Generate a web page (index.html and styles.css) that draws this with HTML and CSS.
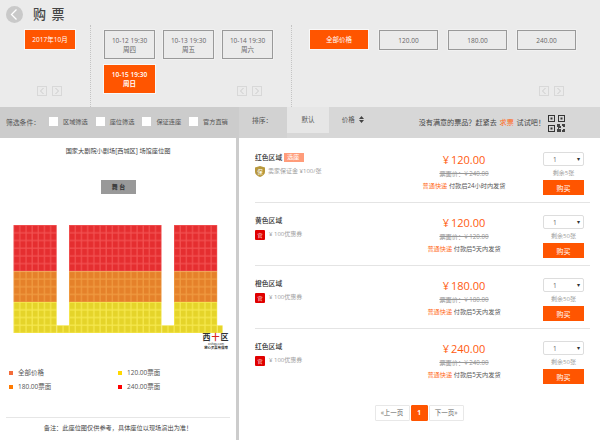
FILE: index.html
```html
<!DOCTYPE html>
<html lang="zh">
<head>
<meta charset="utf-8">
<title>购票</title>
<link rel="stylesheet" href="styles.css">
</head>
<body>
<div class="page">
  <header class="top">
    <div class="heading">
      <span class="back"><svg width="17" height="17" viewBox="0 0 17 17"><path d="M10.5 3.5 5.5 8.5l5 5" fill="none" stroke="#fff" stroke-width="1.3"/></svg></span>
      <h1>购 票</h1>
    </div>
    <div class="choices">
      <section class="col col-month">
        <div class="opts"><span class="opt on month">2017年10月</span></div>
        <div class="arrows"><span class="arrow"><svg width="10" height="10" viewBox="0 0 10 10"><path d="M6.5 2 3.5 5l3 3" fill="none" stroke="#ccc"/></svg></span><span class="arrow"><svg width="10" height="10" viewBox="0 0 10 10"><path d="M3.5 2 6.5 5l-3 3" fill="none" stroke="#ccc"/></svg></span></div>
      </section>
      <section class="col col-date">
        <div class="opts">
          <span class="opt date">10-12 19:30<br>周四</span>
          <span class="opt date">10-13 19:30<br>周五</span>
          <span class="opt date">10-14 19:30<br>周六</span>
          <span class="opt date on">10-15 19:30<br>周日</span>
        </div>
        <div class="arrows"><span class="arrow"><svg width="10" height="10" viewBox="0 0 10 10"><path d="M6.5 2 3.5 5l3 3" fill="none" stroke="#ccc"/></svg></span><span class="arrow"><svg width="10" height="10" viewBox="0 0 10 10"><path d="M3.5 2 6.5 5l-3 3" fill="none" stroke="#ccc"/></svg></span></div>
      </section>
      <section class="col col-price">
        <div class="opts">
          <span class="opt on all">全部价格</span>
          <span class="opt price">120.00</span>
          <span class="opt price">180.00</span>
          <span class="opt price">240.00</span>
        </div>
        <div class="arrows"><span class="arrow"><svg width="10" height="10" viewBox="0 0 10 10"><path d="M6.5 2 3.5 5l3 3" fill="none" stroke="#ccc"/></svg></span><span class="arrow"><svg width="10" height="10" viewBox="0 0 10 10"><path d="M3.5 2 6.5 5l-3 3" fill="none" stroke="#ccc"/></svg></span></div>
      </section>
    </div>
  </header>

  <div class="bar">
    <div class="filters">
      <span class="filter-title">筛选条件：</span>
      <span class="check"><i></i>区域筛选</span>
      <span class="check"><i></i>座位筛选</span>
      <span class="check"><i></i>保证连座</span>
      <span class="check"><i></i>官方直销</span>
    </div>
    <div class="sorts">
      <span class="sort-title">排序：</span>
      <span class="tab active">默认</span>
      <span class="tab">价格 <svg class="updown" width="5" height="7" viewBox="0 0 5 7"><path d="M2.5 0 5 3H0zM0 4h5L2.5 7z" fill="#444"/></svg></span>
      <span class="hint">没有满意的票品？赶紧去 <em>求票</em> 试试吧！</span>
      <svg class="qr" width="17" height="17" viewBox="0 0 17 17">
        <path d="M0 0h7v7H0zM1 1v5h5V1zM2.500 2.500h2v2h-2zM10 0h7v7h-7zM11 1v5h5V1zM12.500 2.500h2v2h-2zM0 10h7v7H0zM1 11v5h5v-5zM2.500 12.500h2v2h-2z" fill="#333" fill-rule="evenodd"/>
        <path d="M9 9h3v2h1v2h-2v1h2v3H9v-3h1v-2H9zM14 9h3v3h-2v-1h-1zM15 14h2v3h-3v-2h1z" fill="#444"/>
      </svg>
    </div>
  </div>

  <main class="body">
    <aside class="venue">
      <p class="venue-title">国家大剧院小剧场[西城区] 场馆座位图</p>
      <div class="stage">舞 台</div>
      <div class="map">
        <svg width="236" height="110" viewBox="0 0 236 110">
          <defs>
            <pattern id="r" width="6.17" height="7.7" patternUnits="userSpaceOnUse" x="13.5" y="0">
              <rect width="6.17" height="7.7" fill="#f25050"/><rect x=".8" y=".8" width="4.9" height="6.4" fill="#e52e30"/>
            </pattern>
            <pattern id="o" width="6.17" height="7.7" patternUnits="userSpaceOnUse" x="13.5" y="46.2">
              <rect width="6.17" height="7.7" fill="#f09a40"/><rect x=".8" y=".8" width="4.9" height="6.4" fill="#e5812a"/>
            </pattern>
            <pattern id="y" width="6.17" height="7.7" patternUnits="userSpaceOnUse" x="13.5" y="77">
              <rect width="6.17" height="7.7" fill="#f6e84e"/><rect x=".8" y=".8" width="4.9" height="6.4" fill="#e5d42a"/>
            </pattern>
          </defs>
          <rect x="13.5" y="0" width="43.2" height="46.2" fill="url(#r)"/>
          <rect x="69" y="0" width="92.5" height="46.2" fill="url(#r)"/>
          <rect x="174" y="0" width="43.2" height="46.2" fill="url(#r)"/>
          <rect x="13.5" y="46.2" width="43.2" height="30.8" fill="url(#o)"/>
          <rect x="69" y="46.2" width="92.5" height="30.8" fill="url(#o)"/>
          <rect x="174" y="46.2" width="43.2" height="30.8" fill="url(#o)"/>
          <rect x="13.5" y="77" width="43.2" height="31" fill="url(#y)"/>
          <rect x="69" y="77" width="92.5" height="31" fill="url(#y)"/>
          <rect x="174" y="77" width="43.2" height="31" fill="url(#y)"/>
          <rect x="56.7" y="100.3" width="12.3" height="7.7" fill="url(#y)"/>
          <rect x="161.5" y="100.3" width="12.5" height="7.7" fill="url(#y)"/>
          <rect x="217.2" y="100.3" width="5.4" height="7.7" fill="url(#y)"/>
        </svg>
        <div class="brand">
          <b>西<em>十</em>区</b>
          <span>xishiqu.com</span>
          <span class="brand-cn">放心买票有保障</span>
        </div>
      </div>
      <ul class="legend">
        <li><i class="dot d-all"></i>全部价格</li>
        <li><i class="dot d-120"></i>120.00票面</li>
        <li><i class="dot d-180"></i>180.00票面</li>
        <li><i class="dot d-240"></i>240.00票面</li>
      </ul>
      <p class="note">备注：此座位图仅供参考，具体座位以现场演出为准！</p>
    </aside>

    <section class="list">
      <article class="ticket">
        <div class="info">
          <h2>红色区域 <span class="tag">选座</span></h2>
          <p class="perk"><svg width="10" height="11" viewBox="0 0 10 11"><path d="M0 1.500 5 0l5 1.500V6c0 2.500-2.500 4-5 5C2.500 10 0 8.500 0 6z" fill="#b8983c"/><text x="5" y="7.500" font-size="5.500" fill="#fff" text-anchor="middle">保</text></svg>卖家保证金 ¥100/张</p>
        </div>
        <div class="mid">
          <p class="cost">¥ 120.00</p>
          <p class="face">票面价：¥ 240.00</p>
          <p class="ship"><em>普通快递</em> 付款后24小时内发货</p>
        </div>
        <div class="buy">
          <div class="qty"><span>1</span><span class="caret">▾</span></div>
          <p class="left-count">剩余5张</p>
          <button class="buy-btn">购买</button>
        </div>
      </article>
      <article class="ticket">
        <div class="info">
          <h2>黄色区域</h2>
          <p class="perk"><span class="guan">官</span>¥ 100优惠券</p>
        </div>
        <div class="mid">
          <p class="cost">¥ 120.00</p>
          <p class="face">票面价：¥ 120.00</p>
          <p class="ship"><em>普通快递</em> 付款后5天内发货</p>
        </div>
        <div class="buy">
          <div class="qty"><span>1</span><span class="caret">▾</span></div>
          <p class="left-count">剩余50张</p>
          <button class="buy-btn">购买</button>
        </div>
      </article>
      <article class="ticket">
        <div class="info">
          <h2>橙色区域</h2>
          <p class="perk"><span class="guan">官</span>¥ 100优惠券</p>
        </div>
        <div class="mid">
          <p class="cost">¥ 180.00</p>
          <p class="face">票面价：¥ 180.00</p>
          <p class="ship"><em>普通快递</em> 付款后5天内发货</p>
        </div>
        <div class="buy">
          <div class="qty"><span>1</span><span class="caret">▾</span></div>
          <p class="left-count">剩余50张</p>
          <button class="buy-btn">购买</button>
        </div>
      </article>
      <article class="ticket last">
        <div class="info">
          <h2>红色区域</h2>
          <p class="perk"><span class="guan">官</span>¥ 100优惠券</p>
        </div>
        <div class="mid">
          <p class="cost">¥ 240.00</p>
          <p class="face">票面价：¥ 240.00</p>
          <p class="ship"><em>普通快递</em> 付款后5天内发货</p>
        </div>
        <div class="buy">
          <div class="qty"><span>1</span><span class="caret">▾</span></div>
          <p class="left-count">剩余50张</p>
          <button class="buy-btn">购买</button>
        </div>
      </article>
      <nav class="pager">
        <span class="pg wide">«上一页</span>
        <span class="pg cur">1</span>
        <span class="pg wide">下一页»</span>
      </nav>
    </section>
  </main>
</div>
</body>
</html>
```

FILE: styles.css
```css
* { box-sizing: border-box; }
html, body { margin: 0; padding: 0; background: #fff; }
body { font-family: "Open Sans", "Noto Sans CJK SC", sans-serif; color: #444; font-size: 6.5px; }
em, i { font-style: normal; }
p, h1, h2, ul { margin: 0; padding: 0; }
.page { width: 600px; height: 440px; overflow: hidden; display: flex; flex-direction: column; }

.top { height: 107px; background: #ebebeb; position: relative; flex: none; }
.heading { display: flex; align-items: center; height: 25px; padding: 3px 0 0 6px; }
.back { width: 17px; height: 17px; border-radius: 50%; background: #c9c9c9; display: block; }
.back svg { display: block; }
.heading h1 { font-size: 13px; line-height: 17px; font-weight: 500; color: #444; margin-left: 10px; letter-spacing: 1px; }
.choices { display: flex; height: 82px; }
.col { display: flex; flex-direction: column; padding-top: 5px; border-right: 1px dotted #c4c4c4; }
.col-month { width: 91px; padding-left: 25px; }
.col-date { width: 201px; padding-left: 13px; }
.col-price { flex: 1; padding-left: 18px; border-right: 0; }
.opts { display: flex; flex-wrap: wrap; gap: 6px 8px; height: 57px; align-content: flex-start; }
.opt { display: flex; align-items: center; justify-content: center; text-align: center; border: 1px solid #999; color: #666; font-size: 6.500px; line-height: 9px; box-shadow: 0 0 0 .5px #f6f6f6; }
.opt.on { background: #ff5500; border-color: #ff5500; color: #fff; box-shadow: 0 0 0 1px #f8f8f8; }
.month { width: 50px; height: 19px; }
.date { width: 51px; height: 29px; }
.date.on { height: 28px; font-weight: 600; }
.all { width: 58px; height: 19px; margin-right: 3px; }
.price { width: 59px; height: 20px; margin-right: 2px; }
.arrows { display: flex; gap: 5px; padding-left: 12px; margin-top: -1px; }
.col-date .arrows { padding-left: 133px; }
.col-price .arrows { padding-left: 229px; }
.arrow { width: 10px; height: 10px; border: 1px solid #d8d8d8; display: block; }
.arrow svg { display: block; margin: -1px; }

.bar { height: 31px; flex: none; display: flex; }
.filters { width: 239px; background: #ccc; display: flex; align-items: center; padding: 0 0 2px 6px; color: #555; }
.filter-title { width: 43px; font-size: 6.800px; }
.check { display: flex; align-items: center; width: 46.700px; font-size: 6.200px; }
.check i { width: 9px; height: 9px; background: #fff; margin-right: 5px; }
.sorts { flex: 1; background: #d7d7d7; display: flex; align-items: flex-start; color: #555; position: relative; }
.sort-title { width: 48px; padding: 8px 0 0 13px; font-size: 6.800px; background: #d2d2d2; height: 31px; }
.tab { width: 42px; height: 26px; line-height: 25px; text-align: center; font-size: 6.500px; }
.tab.active { background: #e6e6e6; }
.tab + .tab { margin-left: 4px; width: 40px; }
.updown { margin-left: 3px; vertical-align: -1px; }
.hint { margin-left: auto; margin-top: 10px; font-size: 7.100px; color: #444; white-space: nowrap; }
.hint em { color: #ff6a1a; margin: 0 1px; }
.qr { margin: 8px 35px 0 3px; flex: none; }

.body { flex: 1; display: flex; min-height: 0; }
.venue { width: 239px; border-right: 3px solid #ccc; padding-top: 8px; flex: none; display: flex; flex-direction: column; }
.venue-title { text-align: center; font-size: 6.200px; line-height: 9px; color: #444; }
.stage { width: 35px; height: 14px; background: #999; margin: 25px 0 0 101px; color: #333; font-size: 6px; font-weight: 700; text-align: center; line-height: 14px; }
.map { position: relative; margin-top: 31px; height: 110px; }
.map svg { display: block; }
.brand { position: absolute; left: 199px; top: 108px; width: 34px; display: flex; flex-direction: column; align-items: center; color: #333; font-family: "Liberation Sans", "Noto Sans CJK SC", sans-serif; font-size: 3px; line-height: 4px; }
.brand b { font-size: 8px; line-height: 9.200px; color: #333; letter-spacing: 1px; font-weight: 700; }
.brand b em { color: #d8281e; }
.brand-cn { font-size: 3.400px; font-weight: 700; }
.legend { list-style: none; margin: 33px 0 0 9px; display: grid; grid-template-columns: 109px 1fr; row-gap: 5px; font-size: 6.500px; color: #555; line-height: 9px; }
.legend li { display: flex; align-items: center; }
.dot { width: 4px; height: 4px; margin-right: 5px; }
.d-all { background: #f36c3a; }
.d-120 { background: #ffd800; }
.d-180 { background: #ff7a00; }
.d-240 { background: #f00; }
.note { margin: 26px 6px 0; border-top: 1px solid #e6e6e6; text-align: center; padding-top: 5px; font-size: 6.200px; line-height: 9px; color: #444; }

.list { flex: 1; padding: 0 10px 0 16px; }
.ticket { height: 63px; display: flex; border-bottom: 1px solid #e4e4e4; padding-top: 11px; }
.ticket:first-child { height: 65px; padding-top: 13px; }
.info { width: 149px; }
.info h2 { font-size: 6.800px; font-weight: 500; line-height: 9px; color: #333; display: flex; align-items: center; gap: 2px; margin-top: 2px; }
.tag { background: #ff9c7a; color: #fff; font-size: 6px; line-height: 9px; padding: 0 3px; width: 20px; font-weight: 400; white-space: nowrap; }
.perk { display: flex; align-items: center; gap: 2px; color: #a0a0a0; font-size: 6px; line-height: 11px; margin-top: 4px; }
.perk svg { display: block; flex: none; margin-right: 1px; }
.guan { width: 10px; height: 10px; background: #e00000; color: #fff; border-radius: 1px; font-size: 5px; line-height: 10px; text-align: center; margin-right: 2px; }
.mid { width: 120px; text-align: center; }
.cost { font-size: 11px; word-spacing: -1px; line-height: 14px; color: #ff5a0f; margin-top: 2px; }
.face { font-size: 6.200px; line-height: 9px; color: #999; text-decoration: line-through; margin-top: 2px; }
.ship { font-size: 6.200px; line-height: 9px; color: #555; margin-top: 3px; }
.ship em { color: #ff6a1a; }
.buy { width: 41px; margin-left: 19px; margin-top: 1px; text-align: center; }
.qty { height: 14px; border: 1px solid #ddd; border-radius: 2px; display: flex; justify-content: space-between; align-items: center; padding: 0 3px 0 9px; font-size: 6.500px; color: #666; background: #fff; }
.caret { color: #333; font-size: 6px; }
.left-count { font-size: 6px; line-height: 9px; color: #a0a0a0; margin-top: 3px; }
.buy-btn { display: block; width: 41px; height: 15px; margin-top: 2px; padding: 0; border: 0; background: #ff5500; color: #fff; font: inherit; font-size: 7px; }
.ticket.last { border-bottom: 0; height: 76px; }
.pager { display: flex; justify-content: center; align-items: center; gap: 1px; margin: 0 0 0 -7px; }
.pg { height: 16px; line-height: 14px; border: 1px solid #e8e8e8; border-radius: 1px; text-align: center; color: #666; font-size: 6.500px; }
.pg.wide { width: 35px; }
.pg.cur { width: 17px; background: #ff5500; border-color: #ff5500; color: #fff; font-weight: 700; }
```
